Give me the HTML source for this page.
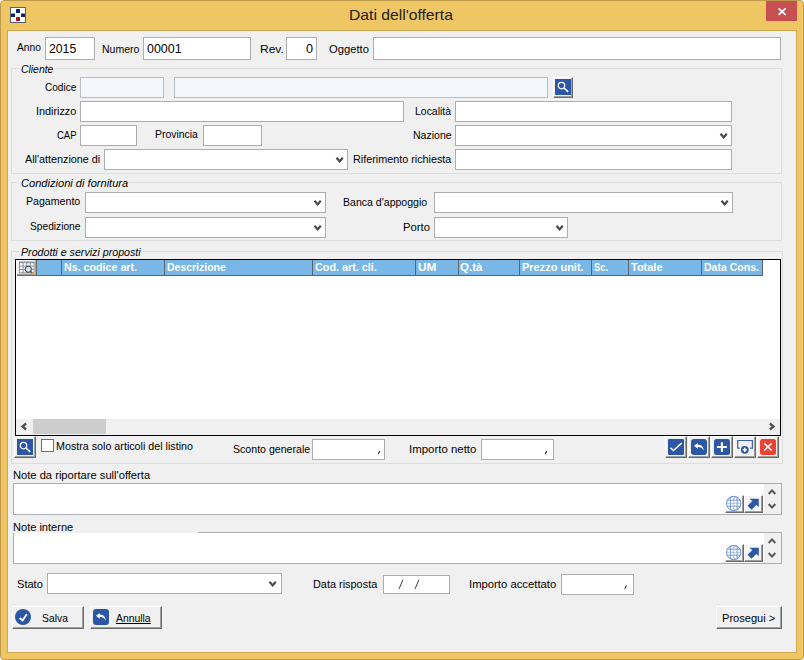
<!DOCTYPE html>
<html>
<head>
<meta charset="utf-8">
<title>Dati dell'offerta</title>
<style>
*{box-sizing:border-box;margin:0;padding:0}
html,body{width:804px;height:660px;overflow:hidden;background:#fff}
body{font-family:"Liberation Sans",sans-serif;font-size:11.5px;color:#000;position:relative}
#win{position:absolute;left:0;top:0;width:804px;height:660px;background:#EFC664;border:1px solid #BF9B4E;border-radius:4px}
#client{position:absolute;left:7px;top:30px;width:790px;height:623px;background:#F0F0F0;border:1px solid #CFA850}
.t{position:absolute;white-space:nowrap;line-height:14px;height:14px;transform-origin:0 0;display:block}
.in{position:absolute;background:#fff;border:1px solid #ABADB3}
.dis{background:#F4F7FC;border-color:#B9BDC6}
.gb{position:absolute;border:1px solid #DDDDDD}
.gap{position:absolute;background:#F0F0F0;height:3px}
.btn{position:absolute;background:#F0F0F0;border-top:1px solid #fff;border-left:1px solid #fff;border-right:1px solid #696969;border-bottom:1px solid #696969;box-shadow:inset -1px -1px 0 #A0A0A0}
.hc{position:absolute;top:260px;height:16px;background:#78B7E6;border-right:1px solid #5E6269;border-bottom:1px solid #5E6269}
svg{position:absolute;display:block;overflow:visible}
.cv{width:9px;height:6px}
</style>
</head>
<body>
<div id="win"></div>
<div id="client"></div>

<!-- title bar -->
<svg style="left:10px;top:7px" width="16" height="16" viewBox="0 0 16 16">
<rect x="0.5" y="0.5" width="15" height="15" fill="#fff" stroke="#5A5F72"/>
<rect x="6" y="2" width="4" height="4" rx="0.6" fill="#0B256B"/>
<rect x="1" y="6.5" width="4" height="3.6" rx="0.6" fill="#0B256B"/>
<rect x="11" y="6.5" width="4" height="3.6" rx="0.6" fill="#0B256B"/>
<rect x="6" y="10" width="4" height="4" rx="0.6" fill="#A3101F"/>
</svg>
<div style="position:absolute;left:766px;top:1px;width:31px;height:20px;background:#C75050"></div>
<svg style="left:778px;top:8px" width="8" height="7" viewBox="0 0 8 7"><path d="M0.6 0.3 L7.6 6.9 M7.6 0.3 L0.6 6.9" stroke="#fff" stroke-width="1.8" fill="none"/></svg>

<!-- row 1 -->
<div class="in" style="left:45px;top:37px;width:50px;height:23px"></div>
<div class="in" style="left:143px;top:37px;width:108px;height:23px"></div>
<div class="in" style="left:286px;top:37px;width:31px;height:23px"></div>
<div class="in" style="left:373px;top:37px;width:408px;height:23px"></div>

<!-- Cliente group -->
<div class="gb" style="left:11px;top:68px;width:771px;height:106px"></div>
<div class="gap" style="left:19px;top:67px;width:36px"></div>
<div class="in dis" style="left:80px;top:77px;width:84px;height:21px"></div>
<div class="in dis" style="left:174px;top:77px;width:374px;height:21px"></div>
<div class="btn" style="left:553px;top:77px;width:20px;height:21px"></div>
<svg style="left:555px;top:79px" width="16" height="16" viewBox="0 0 16 16"><g><rect width="16" height="16" fill="#2B57A5"/><circle cx="6.5" cy="6.6" r="3.2" fill="none" stroke="#fff" stroke-width="1.25"/><path d="M8.9 9 L13.2 12.9" stroke="#fff" stroke-width="1.6"/></g></svg>
<div class="in" style="left:80px;top:101px;width:324px;height:21px"></div>
<div class="in" style="left:455px;top:101px;width:277px;height:21px"></div>
<div class="in" style="left:80px;top:125px;width:57px;height:21px"></div>
<div class="in" style="left:203px;top:125px;width:59px;height:21px"></div>
<div class="in" style="left:455px;top:125px;width:277px;height:21px"></div>
<svg class="cv" style="left:720px;top:133px" viewBox="0 0 9 6"><path d="M0.5 0.8 L3.65 4.4 L6.8 0.8" stroke="#484848" stroke-width="2.2" fill="none"/></svg>
<div class="in" style="left:104px;top:149px;width:244px;height:21px"></div>
<svg class="cv" style="left:336px;top:157px" viewBox="0 0 9 6"><path d="M0.5 0.8 L3.65 4.4 L6.8 0.8" stroke="#484848" stroke-width="2.2" fill="none"/></svg>
<div class="in" style="left:455px;top:149px;width:277px;height:21px"></div>

<!-- Condizioni group -->
<div class="gb" style="left:11px;top:182px;width:771px;height:59px"></div>
<div class="gap" style="left:19px;top:181px;width:110px"></div>
<div class="in" style="left:85px;top:192px;width:241px;height:21px"></div>
<svg class="cv" style="left:314px;top:200px" viewBox="0 0 9 6"><path d="M0.5 0.8 L3.65 4.4 L6.8 0.8" stroke="#484848" stroke-width="2.2" fill="none"/></svg>
<div class="in" style="left:434px;top:192px;width:299px;height:21px"></div>
<svg class="cv" style="left:721px;top:200px" viewBox="0 0 9 6"><path d="M0.5 0.8 L3.65 4.4 L6.8 0.8" stroke="#484848" stroke-width="2.2" fill="none"/></svg>
<div class="in" style="left:85px;top:217px;width:241px;height:21px"></div>
<svg class="cv" style="left:314px;top:225px" viewBox="0 0 9 6"><path d="M0.5 0.8 L3.65 4.4 L6.8 0.8" stroke="#484848" stroke-width="2.2" fill="none"/></svg>
<div class="in" style="left:434px;top:217px;width:134px;height:21px"></div>
<svg class="cv" style="left:556px;top:225px" viewBox="0 0 9 6"><path d="M0.5 0.8 L3.65 4.4 L6.8 0.8" stroke="#484848" stroke-width="2.2" fill="none"/></svg>

<!-- Prodotti group -->
<div class="gb" style="left:11px;top:251px;width:772px;height:213px"></div>
<div class="gap" style="left:19px;top:250px;width:124px"></div>
<div style="position:absolute;left:15px;top:259px;width:766px;height:177px;background:#fff;border:1px solid #000"></div>
<div class="hc" style="left:17px;width:20px;background:#F0F0F0;border-color:#696969;box-shadow:inset -1px -1px 0 #A0A0A0"></div>
<div class="hc" style="left:37px;width:25px"></div>
<div class="hc" style="left:62px;width:103px"></div>
<div class="hc" style="left:165px;width:148px"></div>
<div class="hc" style="left:313px;width:103px"></div>
<div class="hc" style="left:416px;width:43px"></div>
<div class="hc" style="left:459px;width:61px"></div>
<div class="hc" style="left:520px;width:72px"></div>
<div class="hc" style="left:592px;width:37px"></div>
<div class="hc" style="left:629px;width:73px"></div>
<div class="hc" style="left:702px;width:61px"></div>
<svg style="left:19px;top:261px" width="16" height="13" viewBox="0 0 16 13">
<rect x="0" y="0.5" width="15.6" height="12" fill="#8E949C"/>
<g fill="#F7F8FA"><rect x="1" y="2.2" width="2.6" height="2.4"/><rect x="4.6" y="2.2" width="2.6" height="2.4"/><rect x="8.2" y="2.2" width="2.6" height="2.4"/><rect x="11.8" y="2.2" width="2.8" height="2.4"/>
<rect x="1" y="5.6" width="2.6" height="2.4"/><rect x="4.6" y="5.6" width="2.6" height="2.4"/><rect x="8.2" y="5.6" width="2.6" height="2.4"/><rect x="11.8" y="5.6" width="2.8" height="2.4"/>
<rect x="1" y="9" width="2.6" height="2.4"/><rect x="4.6" y="9" width="2.6" height="2.4"/><rect x="8.2" y="9" width="2.6" height="2.4"/><rect x="11.8" y="9" width="2.8" height="2.4"/></g>
<circle cx="9.3" cy="8.2" r="3.1" fill="#DDE6F2" stroke="#2E3238" stroke-width="1"/>
<path d="M11.6 10.4 L13.4 12" stroke="#2E3238" stroke-width="1.2"/>
<circle cx="13.4" cy="11.7" r="0.8" fill="#E08A1E"/>
</svg>
<!-- hscroll -->
<div style="position:absolute;left:16px;top:419px;width:764px;height:16px;background:#F0F0F0"></div>
<div style="position:absolute;left:33px;top:419px;width:73px;height:15px;background:#CDCDCD"></div>
<svg style="left:21px;top:423px" width="6" height="7" viewBox="0 0 6 7"><path d="M5.1 0.5 L1.5 3.5 L5.1 6.5" stroke="#505050" stroke-width="2.3" fill="none"/></svg>
<svg style="left:769px;top:423px" width="6" height="7" viewBox="0 0 6 7"><path d="M0.9 0.5 L4.5 3.5 L0.9 6.5" stroke="#505050" stroke-width="2.3" fill="none"/></svg>

<!-- under grid -->
<div class="btn" style="left:14px;top:436px;width:22px;height:22px"></div>
<svg style="left:17px;top:439px" width="16" height="16" viewBox="0 0 16 16"><g><rect width="16" height="16" fill="#2B57A5"/><circle cx="6.5" cy="6.6" r="3.2" fill="none" stroke="#fff" stroke-width="1.25"/><path d="M8.9 9 L13.2 12.9" stroke="#fff" stroke-width="1.6"/></g></svg>
<div style="position:absolute;left:41px;top:439px;width:13px;height:13px;background:#fff;border:1px solid #707070"></div>
<div class="in" style="left:312px;top:439px;width:73px;height:21px"></div>
<div class="in" style="left:481px;top:439px;width:73px;height:21px"></div>

<div class="btn" style="left:665px;top:436px;width:22px;height:22px"></div>
<div class="btn" style="left:688px;top:436px;width:22px;height:22px"></div>
<div class="btn" style="left:711px;top:436px;width:22px;height:22px"></div>
<div class="btn" style="left:734px;top:436px;width:22px;height:22px"></div>
<div class="btn" style="left:757px;top:436px;width:22px;height:22px"></div>
<svg style="left:668px;top:439px" width="16" height="16" viewBox="0 0 16 16"><g><rect width="16" height="16" rx="1.2" fill="#2B57A5"/><path d="M2.4 8.8 L5.4 11.5 L13.7 4.1" stroke="#fff" stroke-width="1.5" fill="none"/></g></svg>
<svg style="left:691px;top:439px" width="16" height="16" viewBox="0 0 16 16"><g><rect width="16" height="16" rx="3" fill="#2B57A5"/><path d="M3 6.8 L6.7 3.9 L6.7 5.7 C10.6 5.7 12.6 7.6 12.7 11.4 C11.6 9.1 10 8 6.7 8 L6.7 9.7 Z" fill="#fff"/></g></svg>
<svg style="left:714px;top:439px" width="16" height="16" viewBox="0 0 16 16"><g><rect width="16" height="16" rx="2.5" fill="#2B57A5"/><path d="M7.9 3.2 V13 M2.9 8.05 H12.9" stroke="#fff" stroke-width="2"/></g></svg>
<svg style="left:737px;top:439px" width="16" height="16" viewBox="0 0 16 16"><g><path d="M2.7 9.1 H0.7 V1.5 H15.4 V9.1 H13.2" fill="none" stroke="#3661B0" stroke-width="1.2"/><circle cx="7.8" cy="10.8" r="3.9" fill="#2B57A5"/><path d="M7.8 8.7 V12.9 M5.7 10.8 H9.9" stroke="#fff" stroke-width="1.6"/></g></svg>
<svg style="left:760px;top:439px" width="16" height="16" viewBox="0 0 16 16"><g><rect width="16" height="16" rx="2.5" fill="#EA4335"/><path d="M4.3 4.4 L11.6 11.5 M11.6 4.4 L4.3 11.5" stroke="#fff" stroke-width="1.5"/></g></svg>

<!-- notes -->
<div class="in" style="left:13px;top:483px;width:769px;height:32px"></div>
<div style="position:absolute;left:764px;top:484px;width:17px;height:30px;background:#F0F0F0"></div>
<div class="in" style="left:13px;top:532px;width:769px;height:32px"></div>
<div style="position:absolute;left:764px;top:533px;width:17px;height:30px;background:#F0F0F0"></div>
<div style="position:absolute;left:13px;top:520px;width:185px;height:13px;background:#F0F0F0"></div>

<div class="btn" style="left:725px;top:495px;width:19px;height:18px;background:#FAFAFA"></div>
<svg style="left:726px;top:496px" width="16" height="16" viewBox="0 0 16 16"><g><circle cx="7.7" cy="7.5" r="7.2" fill="#FBFCFE" stroke="#4F7BC6" stroke-width="0.8"/><path d="M4.4 1.2 V13.8 M11.1 1.2 V13.8 M1.2 4.2 H14.2 M1.2 10.2 H14.2" stroke="#4F7BC6" stroke-width="0.7" fill="none"/><path d="M7.75 0.4 V14.6 M0.6 7.3 H14.8 M3.2 2.2 Q7.7 -0.4 12.2 2.2 M3.2 12.8 Q7.7 15.4 12.2 12.8" stroke="#7FA0D8" stroke-width="0.6" fill="none"/></g></svg>
<div class="btn" style="left:744px;top:495px;width:19px;height:18px;background:#F6F6F6"></div>
<svg style="left:745px;top:496px" width="16" height="16" viewBox="0 0 16 16"><g><path d="M4.9 2.9 H13.6 V10.8 L11.3 8.7 L6.5 13.5 L2.8 9.8 L7.6 5.0 Z" fill="#2B57A5" stroke="#2B57A5" stroke-width="0.4" stroke-linejoin="round"/></g></svg>
<svg style="left:768px;top:489px" width="8" height="6" viewBox="0 0 8 6"><path d="M0.7 5 L4 1.4 L7.3 5" stroke="#555" stroke-width="2" fill="none"/></svg>
<svg style="left:768px;top:503px" width="8" height="6" viewBox="0 0 8 6"><path d="M0.7 1 L4 4.6 L7.3 1" stroke="#555" stroke-width="2" fill="none"/></svg>
<div class="btn" style="left:725px;top:544px;width:19px;height:18px;background:#FAFAFA"></div>
<svg style="left:726px;top:545px" width="16" height="16" viewBox="0 0 16 16"><g><circle cx="7.7" cy="7.5" r="7.2" fill="#FBFCFE" stroke="#4F7BC6" stroke-width="0.8"/><path d="M4.4 1.2 V13.8 M11.1 1.2 V13.8 M1.2 4.2 H14.2 M1.2 10.2 H14.2" stroke="#4F7BC6" stroke-width="0.7" fill="none"/><path d="M7.75 0.4 V14.6 M0.6 7.3 H14.8 M3.2 2.2 Q7.7 -0.4 12.2 2.2 M3.2 12.8 Q7.7 15.4 12.2 12.8" stroke="#7FA0D8" stroke-width="0.6" fill="none"/></g></svg>
<div class="btn" style="left:744px;top:544px;width:19px;height:18px;background:#F6F6F6"></div>
<svg style="left:745px;top:545px" width="16" height="16" viewBox="0 0 16 16"><g><path d="M4.9 2.9 H13.6 V10.8 L11.3 8.7 L6.5 13.5 L2.8 9.8 L7.6 5.0 Z" fill="#2B57A5" stroke="#2B57A5" stroke-width="0.4" stroke-linejoin="round"/></g></svg>
<svg style="left:768px;top:538px" width="8" height="6" viewBox="0 0 8 6"><path d="M0.7 5 L4 1.4 L7.3 5" stroke="#555" stroke-width="2" fill="none"/></svg>
<svg style="left:768px;top:552px" width="8" height="6" viewBox="0 0 8 6"><path d="M0.7 1 L4 4.6 L7.3 1" stroke="#555" stroke-width="2" fill="none"/></svg>
<!-- bottom -->
<div class="in" style="left:47px;top:573px;width:235px;height:21px"></div>
<svg class="cv" style="left:269px;top:581px" viewBox="0 0 9 6"><path d="M0.5 0.8 L3.65 4.4 L6.8 0.8" stroke="#484848" stroke-width="2.2" fill="none"/></svg>
<div class="in" style="left:383px;top:575px;width:67px;height:19px"></div>
<div class="in" style="left:561px;top:574px;width:73px;height:21px"></div>

<div class="btn" style="left:12px;top:606px;width:72px;height:23px"></div>
<div class="btn" style="left:90px;top:606px;width:72px;height:23px"></div>
<div class="btn" style="left:716px;top:606px;width:66px;height:23px"></div>

<svg style="left:15px;top:609px" width="16" height="16" viewBox="0 0 16 16"><circle cx="8" cy="8" r="8" fill="#2B57A5"/><path d="M4.6 9 L7.6 11.5 L11.9 4.9" stroke="#fff" stroke-width="1.8" fill="none"/></svg>
<svg style="left:93px;top:609px" width="16" height="16" viewBox="0 0 16 16"><g><rect width="16" height="16" rx="3" fill="#2B57A5"/><path d="M3 6.8 L6.7 3.9 L6.7 5.7 C10.6 5.7 12.6 7.6 12.7 11.4 C11.6 9.1 10 8 6.7 8 L6.7 9.7 Z" fill="#fff"/></g></svg>


<svg style="left:0;top:0" width="804" height="660" viewBox="0 0 804 660">
<g stroke="#222" stroke-width="1.05" fill="none">
<path d="M379.8 450.9 L378.2 454"/><path d="M546.8 450.9 L545.2 454"/><path d="M626.4 585.6 L624.8 588.7"/>
</g>
<g stroke="#333" stroke-width="0.95" fill="none">
<path d="M402.9 579.8 L399 589"/><path d="M418.9 579.8 L415 589"/>
</g>
</svg>
<span class="t" style="left:349.0px;top:8.1px;font-size:15px;color:#222;transform:scaleX(1.046)">Dati dell&#x27;offerta</span>
<span class="t" style="left:17.0px;top:40.0px;font-size:11.5px;transform:scaleX(0.889)">Anno</span>
<span class="t" style="left:49.0px;top:41.5px;font-size:13px;transform:scaleX(0.941)">2015</span>
<span class="t" style="left:101.6px;top:41.7px;font-size:11.5px;transform:scaleX(0.912)">Numero</span>
<span class="t" style="left:147.0px;top:41.5px;font-size:13px;transform:scaleX(0.958)">00001</span>
<span class="t" style="left:259.6px;top:41.7px;font-size:11.5px;transform:scaleX(1.043)">Rev.</span>
<span class="t" style="left:305.5px;top:41.5px;font-size:13px;transform:scaleX(0.971)">0</span>
<span class="t" style="left:329.0px;top:41.7px;font-size:11.5px;transform:scaleX(0.976)">Oggetto</span>
<span class="t" style="left:20.5px;top:62.0px;font-size:11.5px;font-style:italic;transform:scaleX(0.903)">Cliente</span>
<span class="t" style="left:44.5px;top:80.0px;font-size:11.5px;transform:scaleX(0.875)">Codice</span>
<span class="t" style="left:35.6px;top:104.0px;font-size:11.5px;transform:scaleX(0.94)">Indirizzo</span>
<span class="t" style="left:414.6px;top:104.0px;font-size:11.5px;transform:scaleX(0.91)">Località</span>
<span class="t" style="left:56.5px;top:128.0px;font-size:11.5px;transform:scaleX(0.826)">CAP</span>
<span class="t" style="left:154.8px;top:127.0px;font-size:11.5px;transform:scaleX(0.906)">Provincia</span>
<span class="t" style="left:412.6px;top:128.0px;font-size:11.5px;transform:scaleX(0.915)">Nazione</span>
<span class="t" style="left:24.5px;top:152.0px;font-size:11.5px;transform:scaleX(0.938)">All&#x27;attenzione di</span>
<span class="t" style="left:353.1px;top:152.0px;font-size:11.5px;transform:scaleX(0.938)">Riferimento richiesta</span>
<span class="t" style="left:20.5px;top:176.0px;font-size:11.5px;font-style:italic;transform:scaleX(0.964)">Condizioni di fornitura</span>
<span class="t" style="left:26.1px;top:194.0px;font-size:11.5px;transform:scaleX(0.922)">Pagamento</span>
<span class="t" style="left:343.1px;top:194.8px;font-size:11.5px;transform:scaleX(0.918)">Banca d&#x27;appoggio</span>
<span class="t" style="left:29.5px;top:219.0px;font-size:11.5px;transform:scaleX(0.886)">Spedizione</span>
<span class="t" style="left:402.8px;top:219.8px;font-size:11.5px;transform:scaleX(0.981)">Porto</span>
<span class="t" style="left:20.5px;top:245.0px;font-size:11.5px;font-style:italic;transform:scaleX(0.927)">Prodotti e servizi proposti</span>
<span class="t" style="left:64.0px;top:260.0px;font-size:11.5px;font-weight:bold;color:#fff;transform:scaleX(0.929)">Ns. codice art.</span>
<span class="t" style="left:166.5px;top:260.0px;font-size:11.5px;font-weight:bold;color:#fff;transform:scaleX(0.911)">Descrizione</span>
<span class="t" style="left:314.7px;top:260.0px;font-size:11.5px;font-weight:bold;color:#fff;transform:scaleX(0.938)">Cod. art. cli.</span>
<span class="t" style="left:418.2px;top:260.0px;font-size:11.5px;font-weight:bold;color:#fff;transform:scaleX(1.029)">UM</span>
<span class="t" style="left:460.3px;top:260.0px;font-size:11.5px;font-weight:bold;color:#fff;transform:scaleX(1.004)">Q.tà</span>
<span class="t" style="left:522.0px;top:260.0px;font-size:11.5px;font-weight:bold;color:#fff;transform:scaleX(0.955)">Prezzo unit.</span>
<span class="t" style="left:593.8px;top:260.0px;font-size:11.5px;font-weight:bold;color:#fff;transform:scaleX(0.818)">Sc.</span>
<span class="t" style="left:631.2px;top:260.0px;font-size:11.5px;font-weight:bold;color:#fff;transform:scaleX(0.955)">Totale</span>
<span class="t" style="left:703.8px;top:260.0px;font-size:11.5px;font-weight:bold;color:#fff;transform:scaleX(0.915)">Data Cons.</span>
<span class="t" style="left:56.1px;top:439.0px;font-size:11.5px;transform:scaleX(0.932)">Mostra solo articoli del listino</span>
<span class="t" style="left:232.6px;top:442.0px;font-size:11.5px;transform:scaleX(0.921)">Sconto generale</span>
<span class="t" style="left:409.4px;top:442.0px;font-size:11.5px;transform:scaleX(0.994)">Importo netto</span>
<span class="t" style="left:13.0px;top:468.0px;font-size:11.5px;transform:scaleX(0.97)">Note da riportare sull&#x27;offerta</span>
<span class="t" style="left:13.0px;top:520.0px;font-size:11.5px;transform:scaleX(0.961)">Note interne</span>
<span class="t" style="left:17.2px;top:577.0px;font-size:11.5px;transform:scaleX(0.963)">Stato</span>
<span class="t" style="left:313.1px;top:576.7px;font-size:11.5px;transform:scaleX(0.948)">Data risposta</span>
<span class="t" style="left:468.6px;top:576.7px;font-size:11.5px;transform:scaleX(0.982)">Importo accettato</span>
<span class="t" style="left:42.3px;top:611.0px;font-size:11.5px;transform:scaleX(0.9)">Salva</span>
<span class="t" style="left:116.0px;top:611.0px;font-size:11.5px;text-decoration:underline;transform:scaleX(0.903)">Annulla</span>
<span class="t" style="left:721.5px;top:611.0px;font-size:11.5px;transform:scaleX(0.963)">Prosegui &gt;</span>
</body>
</html>
